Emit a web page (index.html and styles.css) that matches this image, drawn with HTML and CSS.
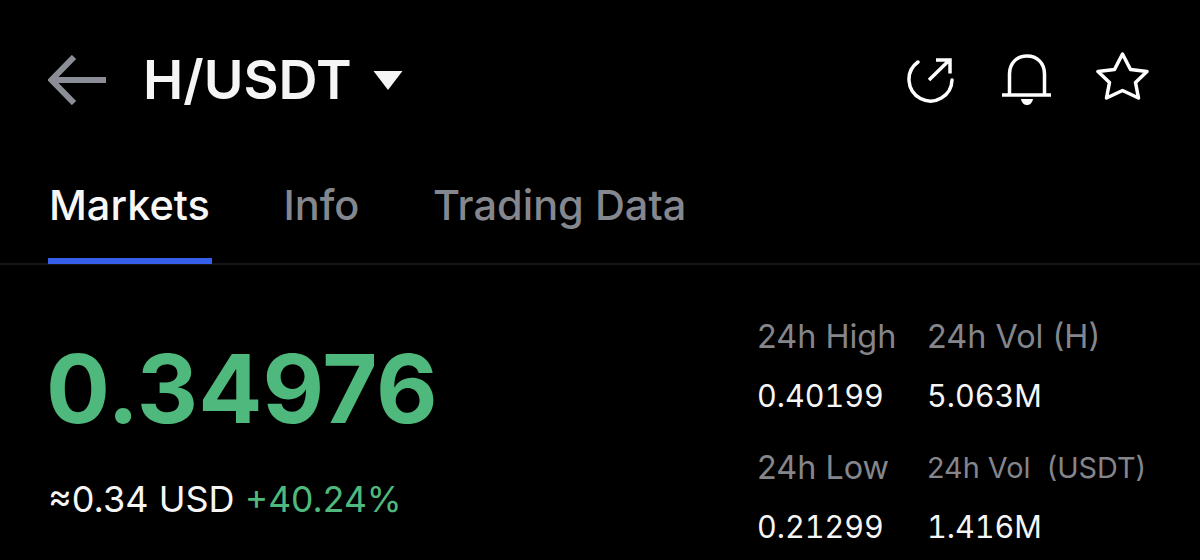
FILE: index.html
```html
<!DOCTYPE html>
<html lang="en">
<head>
<meta charset="utf-8">
<title>H/USDT</title>
<link rel="stylesheet" href="styles.css">
</head>
<body>
<div class="page">
  <header class="header">
    <svg class="back" viewBox="0 0 60 50" width="60" height="50"><path d="M58 25H4M26 2 3.500 25 26 48" fill="none" stroke="#8b8e96" stroke-width="6"/></svg>
    <h1 class="pair">H/USDT</h1>
    <svg class="caret" viewBox="0 0 30 20" width="30" height="20"><path d="M0.500 1H29.500L15 20Z" fill="#f5f5f5"/></svg>
    <div class="actions">
      <svg class="share" viewBox="0 0 50 50" width="50" height="50"><path d="M12 7A21.500 21.500 0 1 0 46 25" fill="none" stroke="#fff" stroke-width="3.500" stroke-linecap="round"/><path d="M23 25 43.500 5M30 5H44V18.500" fill="none" stroke="#fff" stroke-width="3.500"/></svg>
      <svg class="bell" viewBox="0 0 50 56" width="50" height="56"><path d="M8.500 42V22C8.500 11 16 4 26 4S43.500 11 43.500 22V42M1 43H50" fill="none" stroke="#fff" stroke-width="3.500"/><path d="M20 47H32C31 52 28 53 26 53S21 52 20 47Z" fill="#fff"/></svg>
      <svg class="star" viewBox="0 0 54 52" width="54" height="52"><path d="M26.500 3 34.500 18.500 51 20.500 39.500 31.500 42.500 47 26.500 39.500 10.500 47 13.500 31.500 2 20.500 18.500 18.500Z" fill="none" stroke="#fff" stroke-width="3.500" stroke-linejoin="round"/></svg>
    </div>
  </header>
  <nav class="tabs">
    <a class="tab active">Markets</a>
    <a class="tab">Info</a>
    <a class="tab">Trading Data</a>
  </nav>
  <main class="market">
    <section class="summary">
      <div class="price">0.34976</div>
      <div class="sub"><span>≈0.34 USD</span> <span class="change">+40.24%</span></div>
    </section>
    <section class="stats">
      <div class="label">24h High</div><div class="label">24h Vol (H)</div>
      <div class="value">0.40199</div><div class="value">5.063M</div>
      <div class="label">24h Low</div><div class="label small">24h Vol&nbsp; (USDT)</div>
      <div class="value">0.21299</div><div class="value">1.416M</div>
    </section>
  </main>
</div>
</body>
</html>
```
FILE: styles.css
```css
* { box-sizing: border-box; }
html, body { margin: 0; height: 100%; background: #000; overflow: hidden; }
body { font-family: Inter, "Liberation Sans", sans-serif; color: #fff; }
.page { width: 1200px; height: 560px; overflow: hidden; }

.header { display: flex; align-items: center; height: 160px; padding: 0 50px 0 48px; }
.back { flex: none; margin-right: 35px; }
.pair { margin: 0 21px 0 0; font-size: 54px; font-weight: 600; line-height: 60px; color: #f5f5f5; }
.caret { flex: none; margin-top: -1px; }
.actions { display: flex; align-items: center; gap: 45px; margin-left: auto; }
.share, .bell, .star { display: block; }
.star { margin-bottom: 6px; }

.tabs { display: flex; gap: 70.500px; height: 105px; padding: 0 48px; border-bottom: 2px solid #15161b; }
.tab { height: 104px; margin-bottom: -1px; padding: 17px 2px 0 1px; font-size: 41.500px; line-height: 56px; font-weight: 500; color: #85878e; border-bottom: 6px solid transparent; }
.tab.active { color: #f7f7f7; border-bottom-color: #3660ea; }

.market { display: flex; justify-content: space-between; padding: 0 56px 0 46px; }
.summary { padding-top: 66px; }
.price { font-size: 95px; line-height: 116px; font-weight: 700; color: #4fb87c; }
.sub { margin-top: 30px; padding-left: 2px; font-size: 36px; line-height: 44px; color: #f5f5f5; }
.change { color: #4fb87c; font-size: 35.500px; }

.stats { display: grid; grid-template-columns: 170px 217px; grid-template-rows: 59px 72px 59px 40px; padding-top: 52px; font-size: 32.400px; line-height: 40px; }
.label { color: #84868c; white-space: nowrap; }
.label.small { font-size: 28.800px; }
.value { color: #f5f5f5; font-size: 30.500px; font-variant-numeric: tabular-nums; }
```
